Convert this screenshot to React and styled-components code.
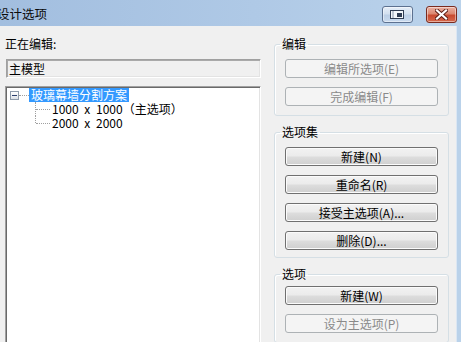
import React from 'react';
import styled, { createGlobalStyle, css } from 'styled-components';

const GlobalStyle = createGlobalStyle`
  html, body { margin: 0; padding: 0; background: #f0f0f0; overflow: hidden; }
  body {
    font-family: "Noto Sans CJK SC", "Noto Sans", sans-serif;
    font-size: 12px;
    color: #000;
  }
`;

const Window = styled.div`
  width: 461px;
  height: 342px;
  display: flex;
  flex-direction: column;
  overflow: hidden;
`;

const TitleBar = styled.div`
  height: 26px;
  flex: none;
  display: flex;
  align-items: center;
  box-sizing: border-box;
  padding-right: 4px;
  background: linear-gradient(to right, #a2bedf 0%, #afc9e6 55%, #bbd3eb 100%);
`;

const Title = styled.div`
  flex: 1;
  margin-left: -3px;
  margin-top: 2px;
  font-size: 12.5px;
  line-height: 16px;
  white-space: nowrap;
  color: #0b0b0b;
`;

const captionVariants = {
  restore: css`
    border: 1px solid #5d7190;
    background: linear-gradient(#e6eef8 0%, #d3e0ef 45%, #bccfe6 55%, #c9daee 100%);
  `,
  close: css`
    border: 1px solid #7a2b1f;
    background: linear-gradient(#eab0a2 0%, #dc8870 45%, #c84a2f 55%, #d5684c 100%);
  `,
};

const CaptionButton = styled.div`
  width: 31px;
  height: 17px;
  box-sizing: border-box;
  border-radius: 3px;
  margin-top: 3px;
  margin-left: ${(p) => p.$gap}px;
  display: flex;
  align-items: center;
  justify-content: center;
  box-shadow: inset 0 0 0 1px rgba(255, 255, 255, 0.45);
  ${(p) => captionVariants[p.$variant]}
`;

const Frame = styled.div`
  flex: 1;
  display: flex;
  background: #f0f0f0;
  border-right: 4px solid #bad2ea;
  box-shadow: inset -1px 0 0 #dce7f3;
  min-height: 0;
`;

const LeftPane = styled.div`
  width: 255px;
  margin-left: 6px;
  padding-top: 11px;
  display: flex;
  flex-direction: column;
  flex: none;
`;

const FieldLabel = styled.div`
  line-height: 14px;
  height: 14px;
  margin-left: -1px;
  white-space: nowrap;
`;

const ReadOnlyBox = styled.div`
  margin-top: 8px;
  height: 19px;
  box-sizing: border-box;
  border: 1px solid;
  border-color: #a0a0a0 #ffffff #ffffff #a0a0a0;
  box-shadow: inset 1px 1px 0 #a9a9a9, inset -1px -1px 0 #e3e3e3;
  background: #f0f0f0;
  padding-left: 2px;
  line-height: 17px;
  white-space: nowrap;
`;

const TreeBox = styled.div`
  margin-top: 8px;
  margin-left: -1px;
  height: 270px;
  flex: none;
  box-sizing: border-box;
  background: #fff;
  border: 1px solid;
  border-color: #a0a0a0 #ffffff #ffffff #a0a0a0;
  box-shadow: inset 1px 1px 0 #696969, inset -1px -1px 0 #e3e3e3;
  padding: 1px 2px 0 1px;
`;

const TreeRow = styled.div`
  height: 14px;
  display: flex;
  align-items: center;
  padding-left: 3px;
  white-space: nowrap;
`;

const Expander = styled.div`
  position: relative;
  width: 9px;
  height: 9px;
  box-sizing: border-box;
  border: 1px solid #8f9cab;
  background: linear-gradient(#ffffff, #dde2e8);
  flex: none;
  &::after {
    content: '';
    position: absolute;
    left: 1px;
    top: 3px;
    width: 5px;
    height: 1px;
    background: #2c3f6e;
  }
`;

const HConnector = styled.div`
  width: ${(p) => p.$w}px;
  height: 0;
  border-top: 1px dotted #a0a0a0;
  flex: none;
`;

const NodeLabel = styled.span`
  padding: 0 2px;
  height: 14px;
  line-height: 14px;
  background: ${(p) => (p.$selected ? '#3399ff' : 'transparent')};
  color: ${(p) => (p.$selected ? '#fff' : '#000')};
`;

const ChildRow = styled.div`
  position: relative;
  height: 14px;
  line-height: 14px;
  padding-left: 45px;
  white-space: nowrap;
  word-spacing: 3px;
  &::before {
    content: '';
    position: absolute;
    left: 28px;
    top: 0;
    height: ${(p) => (p.$last ? '7px' : '14px')};
    border-left: 1px dotted #a0a0a0;
  }
  &::after {
    content: '';
    position: absolute;
    left: 29px;
    top: 7px;
    width: 14px;
    border-top: 1px dotted #a0a0a0;
  }
`;

const RightPane = styled.div`
  width: 175px;
  margin-left: 13px;
  padding-top: 11px;
  flex: none;
  display: flex;
  flex-direction: column;
  gap: ${(p) => p.$gap}px;
`;

const Group = styled.fieldset`
  margin: 0;
  padding: 0;
  min-width: 0;
  border: 1px solid #d5dfe5;
  border-radius: 3px;
  box-shadow: inset 1px 1px 0 #ffffff;
`;

const Legend = styled.legend`
  margin-left: 5px;
  padding: 0 2px;
  line-height: 14px;
  font-size: 12px;
`;

const GroupBody = styled.div`
  display: flex;
  flex-direction: column;
  gap: 9px;
  padding: ${(p) => p.$top}px 10px ${(p) => p.$bottom}px;
`;

const Button = styled.button`
  display: block;
  width: 100%;
  height: 19px;
  box-sizing: border-box;
  margin: 0;
  padding: 0;
  font-family: inherit;
  font-size: 12px;
  line-height: 17px;
  border-radius: 3px;
  border: 1px solid ${(p) => (p.disabled ? '#adb2b5' : '#707070')};
  background: ${(p) =>
    p.disabled
      ? '#f4f4f4'
      : 'linear-gradient(#f2f2f2 0%, #ebebeb 48%, #dddddd 52%, #cfcfcf 100%)'};
  color: ${(p) => (p.disabled ? '#8a8a8a' : '#000')};
  box-shadow: inset 0 0 0 1px ${(p) => (p.disabled ? '#f4f4f4' : '#fbfbfb')};
  white-space: nowrap;
`;

const RestoreIcon = () => (
  <svg width="15" height="9" viewBox="0 0 15 9">
    <rect x="0.5" y="0.5" width="13" height="8" fill="#f3f6fa" stroke="#2f3c52" />
    <rect x="7" y="3" width="5" height="4" fill="#2f3c52" />
    <line x1="3" y1="1" x2="3" y2="8" stroke="#8896aa" />
  </svg>
);

const CloseIcon = () => (
  <svg width="13" height="11" viewBox="0 0 13 11">
    <path d="M2 1.5 L11 9.5 M11 1.5 L2 9.5" stroke="#5a1d14" strokeWidth="4" strokeLinecap="square" />
    <path d="M2 1.5 L11 9.5 M11 1.5 L2 9.5" stroke="#ffffff" strokeWidth="2.2" strokeLinecap="square" />
  </svg>
);

const groups = [
  {
    title: '编辑',
    top: 8,
    bottom: 9,
    buttons: [
      { label: '编辑所选项(E)', disabled: true },
      { label: '完成编辑(F)', disabled: true },
    ],
  },
  {
    title: '选项集',
    top: 8,
    bottom: 7,
    buttons: [
      { label: '新建(N)' },
      { label: '重命名(R)' },
      { label: '接受主选项(A)...' },
      { label: '删除(D)...' },
    ],
  },
  {
    title: '选项',
    top: 5,
    bottom: 9,
    buttons: [
      { label: '新建(W)' },
      { label: '设为主选项(P)', disabled: true },
    ],
  },
];

const children = ['1000 x 1000（主选项）', '2000 x 2000'];

export default function App() {
  return (
    <Window>
      <GlobalStyle />
      <TitleBar>
        <Title>设计选项</Title>
        <CaptionButton $variant="restore" $gap={0}>
          <RestoreIcon />
        </CaptionButton>
        <CaptionButton $variant="close" $gap={13}>
          <CloseIcon />
        </CaptionButton>
      </TitleBar>
      <Frame>
        <LeftPane>
          <FieldLabel>正在编辑:</FieldLabel>
          <ReadOnlyBox>主模型</ReadOnlyBox>
          <TreeBox>
            <TreeRow>
              <Expander />
              <HConnector $w={10} />
              <NodeLabel $selected>玻璃幕墙分割方案</NodeLabel>
            </TreeRow>
            {children.map((c, i) => (
              <ChildRow key={c} $last={i === children.length - 1}>
                {c}
              </ChildRow>
            ))}
          </TreeBox>
        </LeftPane>
        <RightPane $gap={9}>
          {groups.map((g) => (
            <Group key={g.title}>
              <Legend>{g.title}</Legend>
              <GroupBody $top={g.top} $bottom={g.bottom}>
                {g.buttons.map((b) => (
                  <Button key={b.label} disabled={b.disabled}>
                    {b.label}
                  </Button>
                ))}
              </GroupBody>
            </Group>
          ))}
        </RightPane>
      </Frame>
    </Window>
  );
}
